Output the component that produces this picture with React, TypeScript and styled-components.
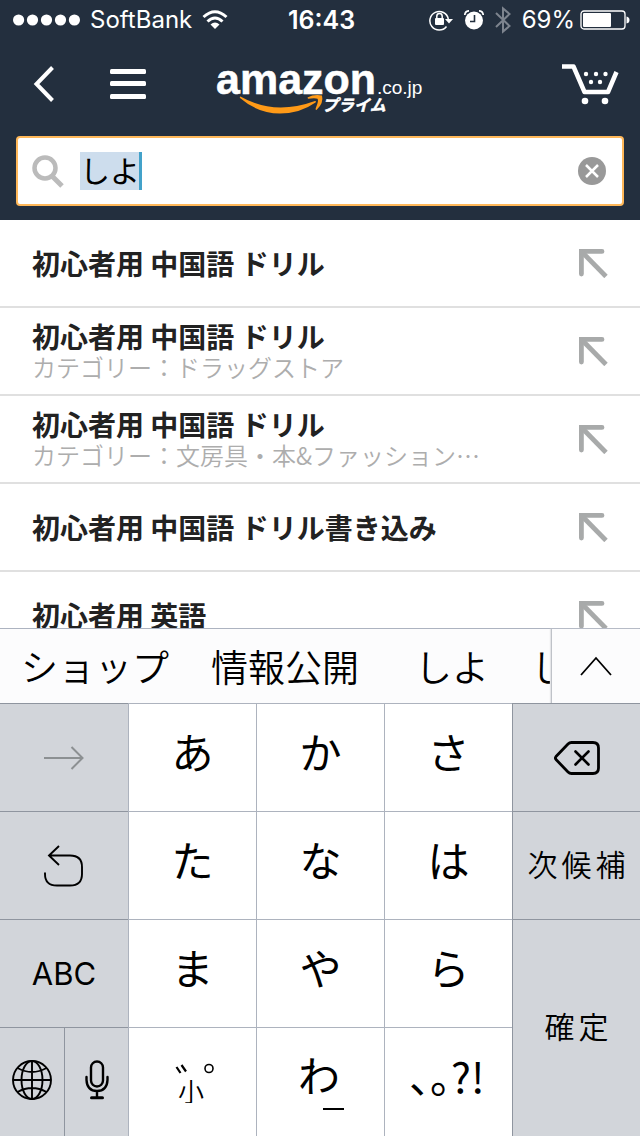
import React, { useState } from "react";
import styled, { createGlobalStyle } from "styled-components";

const jp = `"Noto Sans CJK JP", sans-serif`;
const latin = `Inter, "Noto Sans CJK JP", sans-serif`;

const GlobalStyle = createGlobalStyle`
  *, *::before, *::after { box-sizing: border-box; }
  body { margin: 0; background: #fff; font-family: ${jp}; }
  button { border: 0; margin: 0; padding: 0; background: none; font: inherit; color: inherit; cursor: pointer; }
  svg { display: block; flex: none; }
  ul { list-style: none; margin: 0; padding: 0; }
`;

const Screen = styled.div`
  display: flex;
  flex-direction: column;
  height: 100vh;
`;

const Header = styled.header`
  background: #232f3e;
  color: #fff;
  flex: none;
`;

const StatusBar = styled.div`
  display: grid;
  grid-template-columns: 1fr auto 1fr;
  align-items: center;
  height: 40px;
  padding: 0 10px 0 13px;
  font-family: ${latin};
  font-size: 24px;
  line-height: 40px;
`;

const StatusGroup = styled.div<{ $end?: boolean }>`
  display: flex;
  align-items: center;
  gap: ${(p) => (p.$end ? 11 : 10)}px;
  justify-content: ${(p) => (p.$end ? "flex-end" : "flex-start")};
`;

const BatteryGroup = styled.div`
  display: flex;
  align-items: center;
  gap: 5px;
`;

const Time = styled.time`
  font-size: 25px;
  font-weight: 600;
`;

const NavBar = styled.nav`
  display: grid;
  grid-template-columns: 1fr auto 1fr;
  align-items: center;
  height: 96px;
  padding: 0 20px 8px;
`;

const NavGroup = styled.div<{ $end?: boolean }>`
  display: flex;
  gap: 52px;
  padding-left: 12px;
  justify-content: ${(p) => (p.$end ? "flex-end" : "flex-start")};
`;

const SearchArea = styled.form`
  padding: 0 16px 14px;
`;

const SearchBox = styled.div`
  display: flex;
  align-items: center;
  gap: 16px;
  height: 70px;
  padding: 0 16px 0 14px;
  background: #fff;
  border: 2px solid #ffb859;
  border-radius: 4px;
`;

const FieldWrap = styled.div`
  flex: 1;
  min-width: 0;
  display: flex;
  align-items: center;
`;

const SearchInput = styled.input`
  width: 62px;
  height: 38px;
  padding: 0 0 4px;
  border: 0;
  border-right: 3px solid #43a2ca;
  border-radius: 0;
  outline: 0;
  background: #cddded;
  color: #000;
  font-family: ${jp};
  font-size: 30px;
  line-height: 34px;
`;

const Results = styled.ul`
  flex: 1;
  min-height: 0;
  overflow: hidden;
  background: #fff;
`;

const ResultRow = styled.li`
  display: flex;
  align-items: center;
  height: 88px;
  padding: 0 32px;
  border-bottom: 2px solid #e0e0e0;
`;

const ResultText = styled.a`
  flex: 1;
  min-width: 0;
  color: #222;
  text-decoration: none;
`;

const Term = styled.div`
  font-size: 28px;
  line-height: 32px;
  font-weight: 700;
  white-space: nowrap;
`;

const Category = styled.div`
  font-size: 24px;
  line-height: 30px;
  font-weight: 350;
  color: #adadad;
  white-space: nowrap;
`;

const Keyboard = styled.section`
  flex: none;
  color: #000;
`;

const CandidateBar = styled.div`
  display: flex;
  height: 75px;
  background: #fcfcfd;
  border-top: 1px solid #adb3c0;
`;

const Candidates = styled.div`
  flex: 1;
  min-width: 0;
  display: flex;
  gap: 56px;
  padding-left: 21px;
  overflow: hidden;
`;

const CandidateGroup = styled.div`
  flex: none;
  display: flex;
  gap: 42px;
`;

const Candidate = styled.button`
  flex: none;
  font-size: 37px;
  font-weight: 350;
  line-height: 72px;
  white-space: nowrap;
`;

const ExpandButton = styled.button`
  flex: none;
  display: grid;
  place-items: center;
  width: 89px;
  border-left: 1px solid #bfc2c8;
  box-shadow: -1px 0 1px #e4e5e8;
`;

const Keys = styled.div`
  display: grid;
  grid-template-columns: repeat(5, 1fr);
  grid-template-rows: 108px 108px 108px 109px;
`;

const Key = styled.button<{ $side?: boolean; $edge?: boolean; $rows?: number }>`
  display: flex;
  flex-direction: column;
  align-items: center;
  justify-content: center;
  min-width: 0;
  grid-row: span ${(p) => p.$rows ?? 1};
  background: ${(p) => (p.$side ? "#d2d5da" : "#fff")};
  border-top: 1px solid ${(p) => (p.$side ? "#8f959f" : "#adb3be")};
  border-left: ${(p) => (p.$edge ? 0 : 1)}px solid ${(p) => (p.$side ? "#8f959f" : "#adb3be")};
`;

const Kana = styled.span`
  font-size: 42px;
  line-height: 60px;
  padding-bottom: 14px;
`;

const KeyLabel = styled.span`
  font-size: 30px;
  font-weight: 350;
  letter-spacing: 4px;
  line-height: 40px;
  padding: 0 0 6px 4px;
`;

const LatinLabel = styled.span`
  font-family: ${latin};
  font-size: 31px;
  line-height: 40px;
`;

const SplitKey = styled.div`
  display: grid;
  grid-template-columns: 1fr 1fr;
`;

function Wifi() {
  return (
    <svg width="26" height="20" viewBox="0 0 26 20" fill="none" stroke="#fff" strokeWidth="3">
      <path d="M1.500 7Q13-3.500 24.500 7" />
      <path d="M5.500 11.500Q13 4.500 20.500 11.500" />
      <path d="M13 19L8.500 14.500Q13 10.500 17.500 14.500Z" fill="#fff" stroke="none" />
    </svg>
  );
}

function Signal() {
  return (
    <svg width="67" height="12" viewBox="0 0 67 12" fill="#fff">
      {[5.6, 19.5, 33.5, 47.5, 61.4].map((x) => <circle key={x} cx={x} cy="6" r="5.600" />)}
    </svg>
  );
}

function RotationLock() {
  return (
    <svg width="24" height="22" viewBox="0 0 24 22" fill="none" stroke="#fff" strokeWidth="1.500">
      <path d="M17.500 17.500A9.300 9.300 0 1 1 19.300 10" />
      <path d="M16 10H24L20 14.500Z" fill="#fff" stroke="none" />
      <rect x="6" y="9" width="9" height="7" rx="1" fill="#fff" stroke="none" />
      <path d="M7.800 9V7.200a2.700 2.700 0 0 1 5.400 0V9" />
    </svg>
  );
}

function Alarm() {
  return (
    <svg width="20" height="20" viewBox="0 0 20 20" fill="none">
      <circle cx="10" cy="10.500" r="9" fill="#fff" />
      <path d="M.8 5Q1 1 5 .8M19.200 5Q19 1 15 .8" stroke="#fff" strokeWidth="1.700" />
      <path d="M10.500 5V11.500H6" stroke="#232f3e" strokeWidth="1.600" />
    </svg>
  );
}

function Bluetooth() {
  return (
    <svg width="16" height="28" viewBox="0 0 16 28" fill="none" stroke="#7d848e" strokeWidth="2">
      <path d="M1 7L14.500 20L8 25.500V2.500L14.500 8L1 21" />
    </svg>
  );
}

function Battery() {
  return (
    <svg width="50" height="20" viewBox="0 0 50 20">
      <rect x="1" y="1" width="44" height="18" rx="3" fill="none" stroke="#fff" strokeWidth="1.300" />
      <rect x="3" y="3" width="28" height="14" rx="1" fill="#fff" />
      <path d="M46.500 6.500Q49.500 7 49.500 10Q49.500 13 46.500 13.500Z" fill="#fff" />
    </svg>
  );
}

function Logo() {
  return (
    <svg width="208" height="60" viewBox="0 0 208 60" role="img" aria-label="amazon.co.jp プライム">
      <text x="0" y="40" fill="#fff" stroke="#fff" strokeWidth=".5" fontFamily="'Liberation Sans', sans-serif" fontWeight="700" fontSize="43">amazon</text>
      <text x="161" y="40" fill="#fff" fontFamily="'Liberation Sans', sans-serif" fontSize="19">.co.jp</text>
      <path d="M24.500 42.500Q58 62 99 47Q101 47 99.500 48.500Q84 59.500 64 59.500Q42 59.500 24 44Q23.500 42.500 24.500 42.500Z" fill="#ff9a17" />
      <path d="M91.500 43.500Q98 40 106 41.500Q108 49 100.500 56Q99 56 100 53.500Q103 46.500 101.500 44.800Q99 43.500 92 44.800Z" fill="#ff9a17" />
      <text x="106" y="57" fill="#fff" stroke="#fff" strokeWidth=".5" fontFamily="'Noto Sans CJK JP', sans-serif" fontWeight="700" fontStyle="italic" fontSize="16">プライム</text>
    </svg>
  );
}

function Cart() {
  return (
    <svg width="58" height="42" viewBox="0 0 58 42" fill="none" stroke="#fff">
      <path d="M0 3.500H11.500L22.500 29H46L54.500 9" strokeWidth="4.500" strokeLinejoin="round" />
      <g fill="#fff" stroke="none">
        {[[24, 11], [34, 11], [43.5, 11], [29, 19], [38, 19]].map(([x, y]) => <circle key={x} cx={x} cy={y} r="2.200" />)}
        <circle cx="23" cy="38" r="3.300" />
        <circle cx="43" cy="38" r="3.300" />
      </g>
    </svg>
  );
}

function FillArrow() {
  return (
    <svg width="30" height="30" viewBox="0 0 30 30" fill="none" stroke="#a8aaaa" strokeWidth="4.800">
      <path d="M3.400 26V3.400H24" strokeLinecap="round" />
      <path d="M3.500 3.500L28 28.500" />
    </svg>
  );
}

const results = [
  { term: "初心者用 中国語 ドリル" },
  { term: "初心者用 中国語 ドリル", category: "カテゴリー：ドラッグストア" },
  { term: "初心者用 中国語 ドリル", category: "カテゴリー：文房具・本&ファッション…" },
  { term: "初心者用 中国語 ドリル書き込み" },
  { term: "初心者用 英語" },
];

function KanaKey({ children }: { children: React.ReactNode }) {
  return <Key type="button"><Kana>{children}</Kana></Key>;
}

export default function App() {
  const [query, setQuery] = useState("しよ");
  return (
    <Screen>
      <GlobalStyle />
      <Header>
        <StatusBar>
          <StatusGroup><Signal /><span>SoftBank</span><Wifi /></StatusGroup>
          <Time>16:43</Time>
          <StatusGroup $end>
            <RotationLock /><Alarm /><Bluetooth />
            <BatteryGroup><span>69%</span><Battery /></BatteryGroup>
          </StatusGroup>
        </StatusBar>
        <NavBar>
          <NavGroup>
            <button type="button" aria-label="戻る">
              <svg width="26" height="36" viewBox="0 0 26 36" fill="none" stroke="#fff" strokeWidth="4"><path d="M20.500 1.500L4.500 18L20.500 34.500" /></svg>
            </button>
            <button type="button" aria-label="メニュー">
              <svg width="36" height="32" viewBox="0 0 36 32" fill="#fff"><rect y="1" width="36" height="5" rx="1.500" /><rect y="13" width="36" height="5" rx="1.500" /><rect y="26" width="36" height="5" rx="1.500" /></svg>
            </button>
          </NavGroup>
          <Logo />
          <NavGroup $end><button type="button" aria-label="カート"><Cart /></button></NavGroup>
        </NavBar>
        <SearchArea onSubmit={(e) => e.preventDefault()}>
          <SearchBox>
            <svg width="32" height="34" viewBox="0 0 32 34" fill="none" stroke="#bbb"><circle cx="13" cy="14" r="10.500" strokeWidth="4.500" /><path d="M20 22L30 32" strokeWidth="5" /></svg>
            <FieldWrap>
              <SearchInput aria-label="検索" value={query} onChange={(e) => setQuery(e.target.value)} />
            </FieldWrap>
            <button type="button" aria-label="消去" onClick={() => setQuery("")}>
              <svg width="28" height="28" viewBox="0 0 28 28"><circle cx="14" cy="14" r="14" fill="#999" /><path d="M8 8L20 20M20 8L8 20" stroke="#fff" strokeWidth="2.500" /></svg>
            </button>
          </SearchBox>
        </SearchArea>
      </Header>
      <Results>
        {results.map((r, i) => (
          <ResultRow key={i}>
            <ResultText href="#"><Term>{r.term}</Term>{r.category && <Category>{r.category}</Category>}</ResultText>
            <button type="button" aria-label="入力欄に追加"><FillArrow /></button>
          </ResultRow>
        ))}
      </Results>
      <Keyboard aria-label="キーボード">
        <CandidateBar>
          <Candidates>
            <CandidateGroup><Candidate type="button">ショップ</Candidate><Candidate type="button">情報公開</Candidate></CandidateGroup>
            <CandidateGroup><Candidate type="button">しよ</Candidate><Candidate type="button">し</Candidate></CandidateGroup>
          </Candidates>
          <ExpandButton type="button" aria-label="候補を開く">
            <svg width="32" height="20" viewBox="0 0 32 20" fill="none" stroke="#000" strokeWidth="1.800"><path d="M1 19L16 2L31 19" /></svg>
          </ExpandButton>
        </CandidateBar>
        <Keys>
          <Key type="button" $side $edge aria-label="次へ">
            <svg width="40" height="24" viewBox="0 0 40 24" fill="none" stroke="#8c9092" strokeWidth="2"><path d="M0 12H38.500M27.500 1L38.500 12L27.500 23" /></svg>
          </Key>
          <KanaKey>あ</KanaKey><KanaKey>か</KanaKey><KanaKey>さ</KanaKey>
          <Key type="button" $side aria-label="削除">
            <svg width="46" height="34" viewBox="0 0 46 34" fill="none" stroke="#000" strokeWidth="2.800" strokeLinejoin="round" strokeLinecap="round"><path d="M17.500 1.500H39Q44.500 1.500 44.500 7V27Q44.500 32.500 39 32.500H17.500Q15.500 32.500 14 31L2 18.500Q.8 17 2 15.500L14 3Q15.500 1.500 17.500 1.500Z" /><path d="M21.500 10.500L34.500 23.500M34.500 10.500L21.500 23.500" strokeWidth="2.600" /></svg>
          </Key>
          <Key type="button" $side $edge aria-label="戻す">
            <svg width="40" height="42" viewBox="0 0 40 42" fill="none" stroke="#000" strokeWidth="1.900"><path d="M15 1L5 10.500L15 20M5 10.500H26Q38 10.500 38 22V29Q38 40.500 26 40.500H13Q1 40.500 1 29V27.500" /></svg>
          </Key>
          <KanaKey>た</KanaKey><KanaKey>な</KanaKey><KanaKey>は</KanaKey>
          <Key type="button" $side><KeyLabel>次候補</KeyLabel></Key>
          <Key type="button" $side $edge><LatinLabel>ABC</LatinLabel></Key>
          <KanaKey>ま</KanaKey><KanaKey>や</KanaKey><KanaKey>ら</KanaKey>
          <Key type="button" $side $rows={2}><KeyLabel>確定</KeyLabel></Key>
          <SplitKey>
            <Key type="button" $side $edge aria-label="言語">
              <svg width="40" height="44" viewBox="0 0 40 44" fill="none" stroke="#000" strokeWidth="1.900"><circle cx="20" cy="20" r="19" /><ellipse cx="20" cy="20" rx="10.500" ry="19" /><path d="M20 1V39M1 20H39M5.500 8Q20 16 34.500 8M5.500 32Q20 24 34.500 32" /></svg>
            </Key>
            <Key type="button" $side aria-label="音声入力">
              <svg width="24" height="44" viewBox="0 0 24 44" fill="none" stroke="#000" strokeWidth="2.400" strokeLinecap="round"><rect x="6" y="1.500" width="12" height="25" rx="6" /><path d="M1.500 17V20Q2 31 12 31Q22 31 22.500 20V17M12 31V37.500" /><path d="M6.500 37.700H17.500" strokeWidth="3" /></svg>
            </Key>
          </SplitKey>
          <Key type="button" aria-label="濁点 半濁点 小文字">
            <svg width="42" height="42" viewBox="0 0 42 42" fill="none" stroke="#000"><path d="M4.500 6L8.500 12M9.500 4L14 10.500" strokeWidth="2.200" /><circle cx="37" cy="7.500" r="4" strokeWidth="1.600" /><text x="6" y="41" fill="#000" stroke="none" fontFamily="'Noto Sans CJK JP', sans-serif" fontWeight="350" fontSize="26">小</text></svg>
          </Key>
          <Key type="button" aria-label="わ ー">
            <svg width="50" height="60" viewBox="0 0 50 60"><text x="2" y="40" fontFamily="'Noto Sans CJK JP', sans-serif" fontSize="42">わ</text><path d="M27 57H48" stroke="#000" strokeWidth="2" /></svg>
          </Key>
          <Key type="button" aria-label="、。?!">
            <svg width="80" height="52" viewBox="0 0 80 52"><text x="0" y="37" fontFamily="'Noto Sans CJK JP', sans-serif" fontSize="42" style={{ fontFeatureSettings: "'halt'" }}>、。?!</text></svg>
          </Key>
        </Keys>
      </Keyboard>
    </Screen>
  );
}
